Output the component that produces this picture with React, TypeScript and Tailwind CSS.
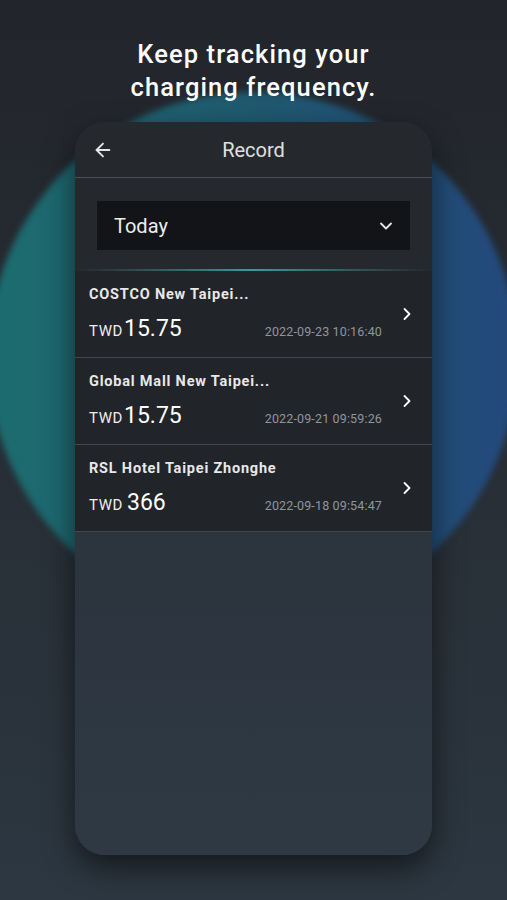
import React from "react";
import { ArrowLeft, ChevronDown, ChevronRight } from "lucide-react";

const items = [
  { title: "COSTCO New Taipei...", amount: "15.75", date: "2022-09-23 10:16:40", gap: false },
  { title: "Global Mall New Taipei...", amount: "15.75", date: "2022-09-21 09:59:26", gap: false },
  { title: "RSL Hotel Taipei Zhonghe", amount: "366", date: "2022-09-18 09:54:47", gap: true },
];

export default function App() {
  return (
    <div
      className="relative w-[507px] h-[900px] overflow-hidden bg-gradient-to-b from-[#22252a] to-[#2c3741] flex flex-col items-center"
      style={{ fontFamily: "Roboto, 'Noto Sans', sans-serif" }}
    >
      <div className="absolute left-[-12px] top-[92px] w-[530px] h-[530px] rounded-full bg-gradient-to-r from-[#1c6d6f] via-[#20596f] to-[#24487c] blur-[3px]" />
      <h1 className="relative pt-[38px] text-center text-[25.5px] leading-[33px] font-medium text-white tracking-[1.1px]">
        Keep tracking your
        <br />
        charging frequency.
      </h1>
      <div className="relative mt-[18px] w-[357px] h-[733px] rounded-[30px] overflow-hidden flex flex-col bg-gradient-to-b from-[#292e35] to-[#2e3944] shadow-[0_12px_30px_rgba(0,0,0,0.55)]">
        <div className="h-[55px] shrink-0 bg-[#25282d] flex items-center relative">
          <ArrowLeft className="absolute left-[17px] top-[17px] text-[#e6e6e6]" size={22} strokeWidth={2} />
          <div className="w-full text-center text-[20px] text-[#e0e0e0]">Record</div>
        </div>
        <div className="h-px shrink-0 bg-[#4a4f56]" />
        <div className="shrink-0 bg-[#25282d] px-[22px] pt-[23px] pb-[19px]">
          <div className="h-[49px] bg-[#121417] flex items-center justify-between pl-[17px] pr-[14px]">
            <span className="text-[20px] text-[#ececec]">Today</span>
            <ChevronDown className="text-[#e6e6e6]" size={20} strokeWidth={2.2} />
          </div>
        </div>
        <div className="h-[2px] shrink-0 bg-gradient-to-r from-[#25282d] via-[#3a9a9c] to-[#25282d]" />
        {items.map((it, i) => (
          <div key={i} className="h-[87px] shrink-0 bg-[#212429] border-b border-[#42474e] flex items-center">
            <div className="flex-1 pl-[14px] pt-[14px] h-full flex flex-col">
              <div className="text-[14.5px] leading-5 font-bold text-[#e8e8e8] tracking-[0.8px]">{it.title}</div>
              <div className="mt-[9px] flex items-baseline justify-between">
                <div className="flex items-baseline text-white">
                  <span className="text-[15px] tracking-[0.6px] text-[#ededed]">TWD</span>
                  <span className={`text-[23px] leading-[30px] ${it.gap ? "ml-[4px]" : "ml-[1px]"}`}>{it.amount}</span>
                </div>
                <span className="text-[12.5px] tracking-[0.15px] text-[#8f969e]">{it.date}</span>
              </div>
            </div>
            <div className="w-[50px] flex justify-center">
              <ChevronRight className="text-white" size={20} strokeWidth={2.2} />
            </div>
          </div>
        ))}
        <div className="flex-1" />
      </div>
    </div>
  );
}
